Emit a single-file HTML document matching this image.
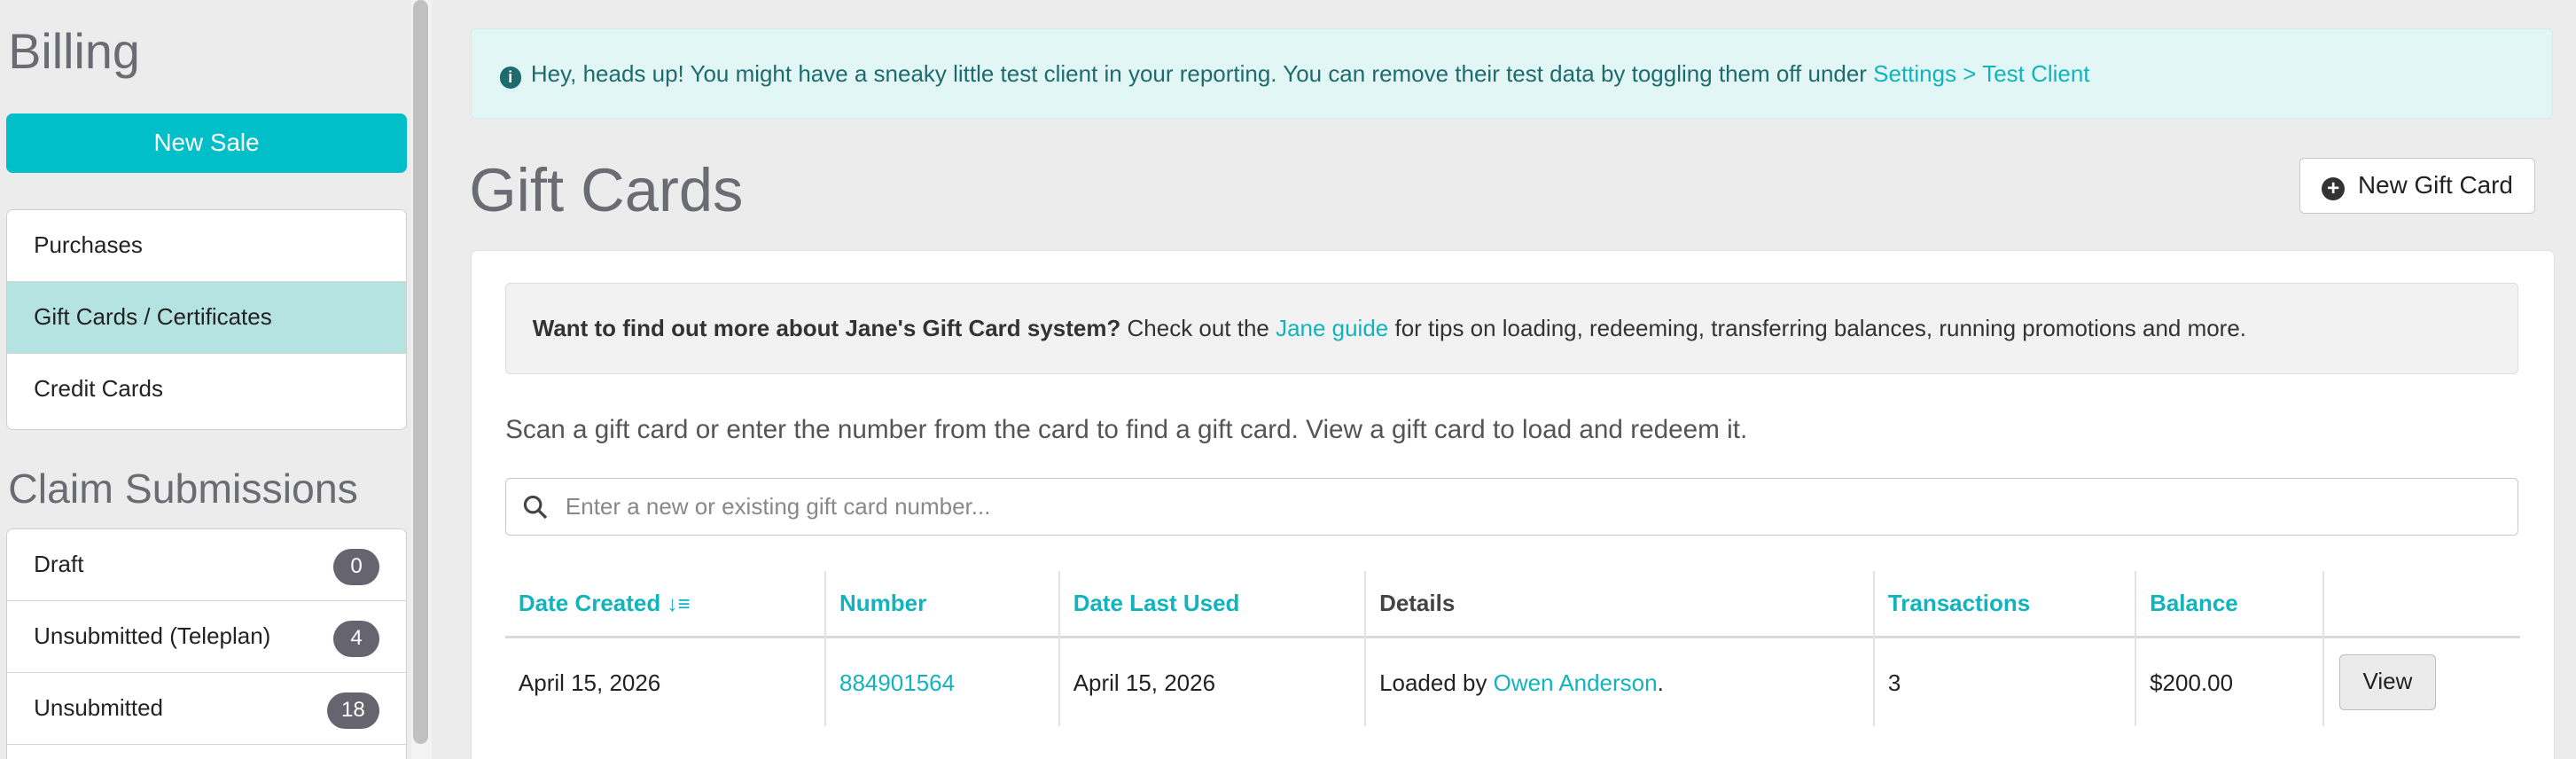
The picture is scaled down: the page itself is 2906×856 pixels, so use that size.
<!DOCTYPE html>
<html style="height:856px;overflow:hidden;"><head><meta charset="utf-8"><style>
html,body{margin:0;padding:0;}
body{width:1565px;height:461px;overflow:hidden;zoom:1.8569;background:#ececec;font-family:"Liberation Sans",sans-serif;position:relative;color:#333;}
.a{position:absolute;}
.side{left:0;top:0;width:250px;height:462px;background:#ececec;}
.list{background:#fff;border:1px solid #cfcfcf;border-radius:4px;overflow:hidden;}
.row{height:43px;border-bottom:1px solid #d5d5d5;font-size:14px;line-height:43px;padding-left:16px;color:#222;position:relative;}
.badge{position:absolute;right:16px;top:12px;height:22px;line-height:22px;min-width:28px;text-align:center;border-radius:11px;background:#66656f;color:#fff;font-size:13px;padding:0 2px;box-sizing:border-box;}
.tl{color:#11b4bc;}
</style></head><body>
<div class="a side">
 <div class="a" style="left:5px;top:14px;font-size:30px;color:#6b6b73;">Billing</div>
 <div class="a" style="left:4px;top:69px;width:243px;height:36px;background:#00bfc9;border-radius:4px;color:#fff;font-size:15px;line-height:36px;text-align:center;">New Sale</div>
 <div class="a list" style="left:4px;top:127px;width:242px;height:133px;">
  <div class="row">Purchases</div>
  <div class="row" style="background:#b5e3e1;">Gift Cards / Certificates</div>
  <div class="row" style="border:0">Credit Cards</div>
 </div>
 <div class="a" style="left:5px;top:282px;font-size:25px;color:#6b6b73;">Claim Submissions</div>
 <div class="a list" style="left:4px;top:321px;width:242px;height:160px;">
  <div class="row">Draft<span class="badge">0</span></div>
  <div class="row">Unsubmitted (Teleplan)<span class="badge">4</span></div>
  <div class="row">Unsubmitted<span class="badge" style="min-width:32px">18</span></div>
 </div>
</div>
<div class="a" style="left:250px;top:0;width:12px;height:462px;background:#f3f3f3;"></div>
<div class="a" style="left:251px;top:0;width:9px;height:452px;background:#c1c1c1;border-radius:5px;"></div>
<div class="a" style="left:286px;top:17px;width:1264px;height:54px;background:#e2f6f6;border:1px solid #cdeeee;border-radius:3px;font-size:14px;line-height:54px;color:#1e6b6e;">
 <span style="display:inline-block;width:13px;height:13px;border-radius:50%;background:#1e6b6e;color:#fff;font-size:10px;line-height:13px;text-align:center;font-weight:bold;margin:0 6px 0 17px;vertical-align:-1px;">i</span>Hey, heads up! You might have a sneaky little test client in your reporting. You can remove their test data by toggling them off under <span class="tl">Settings &gt; Test Client</span>
</div>
<div class="a" style="left:285px;top:94px;font-size:37px;color:#6b6b73;">Gift Cards</div>
<div class="a" style="left:1397px;top:96px;width:143px;height:34px;background:#fff;border:1px solid #c8c8c8;border-radius:3px;font-size:15px;line-height:32px;box-sizing:border-box;color:#222;">
 <span style="display:inline-block;width:14px;height:14px;border-radius:50%;background:#333;color:#fff;font-size:13px;line-height:14px;text-align:center;font-weight:bold;margin:0 8px 0 13px;vertical-align:-1px;">+</span>New Gift Card</div>
<div class="a" style="left:286px;top:152px;width:1265px;height:330px;background:#fff;border:1px solid #e0e0e0;border-radius:4px;"></div>
<div class="a" style="left:307px;top:172px;width:1222px;height:54px;background:#f2f2f2;border:1px solid #dcdcdc;border-radius:3px;font-size:14px;line-height:54px;color:#333;"><span style="padding-left:16px;font-weight:bold;">Want to find out more about Jane's Gift Card system?</span> Check out the <span class="tl">Jane guide</span> for tips on loading, redeeming, transferring balances, running promotions and more.</div>
<div class="a" style="left:307px;top:252px;font-size:16px;color:#555;">Scan a gift card or enter the number from the card to find a gift card. View a gift card to load and redeem it.</div>
<div class="a" style="left:307px;top:290px;width:1222px;height:34px;border:1px solid #c9c9c9;border-radius:3px;background:#fff;font-size:14px;line-height:34px;color:#888;">
 <svg style="position:absolute;left:10px;top:10px" width="15" height="15" viewBox="0 0 15 15"><circle cx="6" cy="6" r="4.7" fill="none" stroke="#444" stroke-width="1.7"/><path d="M9.5 9.5L14 14" stroke="#444" stroke-width="1.8"/></svg>
 <span style="padding-left:36px">Enter a new or existing gift card number...</span></div>
<div class="a" style="left:307px;top:347px;width:1224px;font-size:14px;">
 <div style="height:39px;border-bottom:2px solid #dadada;position:relative;font-weight:bold;line-height:39px;">
  <span class="a tl" style="left:8px">Date Created <span style="font-size:13px">↓≡</span></span>
  <span class="a tl" style="left:203px">Number</span>
  <span class="a tl" style="left:345px">Date Last Used</span>
  <span class="a" style="left:531px;color:#444">Details</span>
  <span class="a tl" style="left:840px">Transactions</span>
  <span class="a tl" style="left:999px">Balance</span>
 </div>
 <div style="height:54px;position:relative;line-height:54px;color:#222;">
  <span class="a" style="left:8px">April 15, 2026</span>
  <span class="a tl" style="left:203px">884901564</span>
  <span class="a" style="left:345px">April 15, 2026</span>
  <span class="a" style="left:531px">Loaded by <span class="tl">Owen Anderson</span>.</span>
  <span class="a" style="left:840px">3</span>
  <span class="a" style="left:999px">$200.00</span>
  <span class="a" style="left:1114px;top:10px;width:59px;height:34px;background:#ebebeb;border:1px solid #bdbdbd;border-radius:3px;line-height:32px;text-align:center;box-sizing:border-box;">View</span>
 </div>
 <div class="a" style="left:194px;top:0;width:1px;height:94px;background:#e2e2e2"></div>
 <div class="a" style="left:336px;top:0;width:1px;height:94px;background:#e2e2e2"></div>
 <div class="a" style="left:522px;top:0;width:1px;height:94px;background:#e2e2e2"></div>
 <div class="a" style="left:831px;top:0;width:1px;height:94px;background:#e2e2e2"></div>
 <div class="a" style="left:990px;top:0;width:1px;height:94px;background:#e2e2e2"></div>
 <div class="a" style="left:1104px;top:0;width:1px;height:94px;background:#e2e2e2"></div>
</div>
</body></html>
